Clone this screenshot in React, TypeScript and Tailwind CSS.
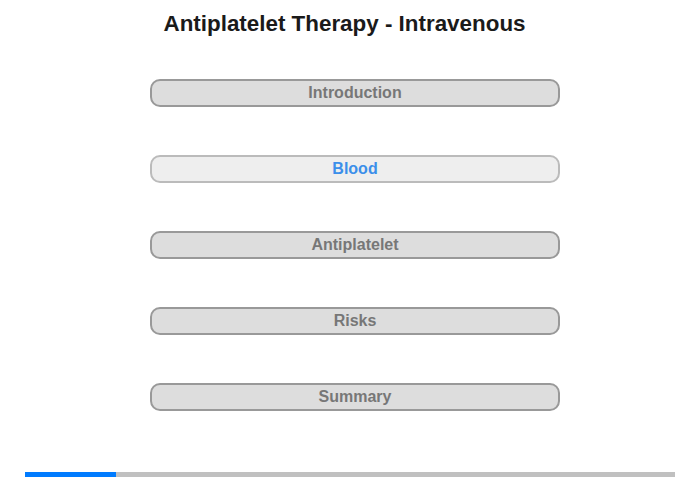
import React from 'react';

const items = ['Introduction', 'Blood', 'Antiplatelet', 'Risks', 'Summary'];
const active = 1;

export default function App() {
  return (
    <div className="w-[700px] h-[480px] bg-white flex flex-col font-['Liberation_Sans',Arial,sans-serif]">
      <h1 className="mt-[11px] h-[26px] pr-[11px] text-center text-[22.4px] leading-[26px] font-bold text-[#1a1a1a]">
        Antiplatelet Therapy - Intravenous
      </h1>
      <div className="mt-[42px] pl-[10px] flex flex-col items-center gap-[48px]">
        {items.map((label, i) => (
          <button
            key={label}
            className={
              i === active
                ? 'w-[410px] h-[28px] rounded-[10px] border-2 border-[#bbbbbb] bg-[#eeeeee] text-[16px] font-bold text-[#3b8fea] leading-[24px]'
                : 'w-[410px] h-[28px] rounded-[10px] border-2 border-[#999999] bg-[#dddddd] text-[16px] font-bold text-[#777777] leading-[24px]'
            }
          >
            {label}
          </button>
        ))}
      </div>
      <div className="mt-auto mb-[3px] mx-[25px] h-[5px] bg-[#c0c0c0] flex">
        <div className="w-[91px] h-full bg-[#007bff]" />
      </div>
    </div>
  );
}
